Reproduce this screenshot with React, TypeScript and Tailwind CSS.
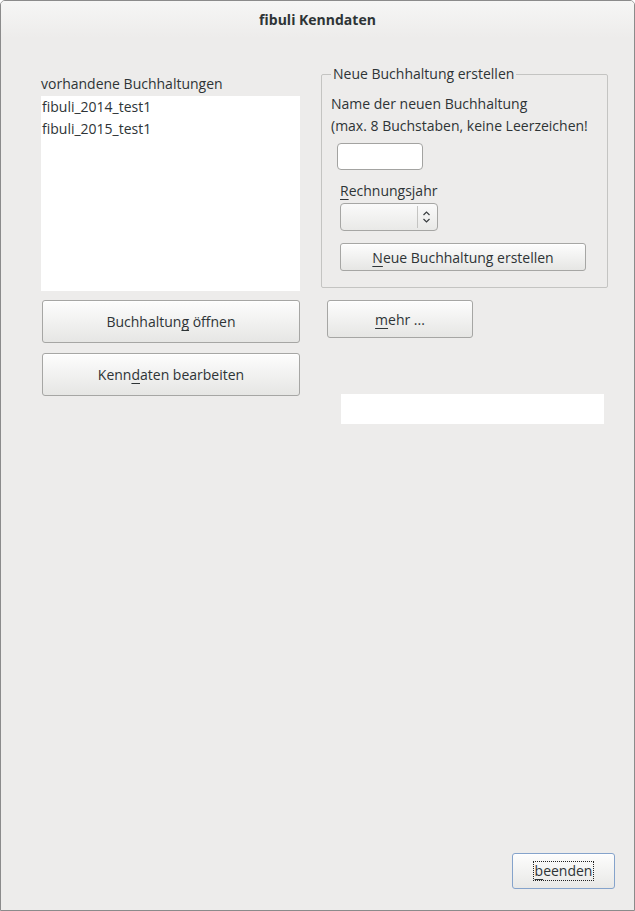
const btn =
  "flex items-center justify-center rounded-[3px] border border-[#a6a6a4] bg-gradient-to-b from-[#fdfdfd] to-[#e6e6e4] text-[#2e3436] shadow-[inset_0_1px_0_#ffffff]";

function U({ children }: { children: string }) {
  return <span className="underline underline-offset-[3px] decoration-1">{children}</span>;
}

export default function App() {
  return (
    <div
      className="w-[635px] h-[911px] flex flex-col border border-[#8b8b8b] rounded-t-[5px] bg-[#edeceb] text-[14px] text-[#2e3436] overflow-hidden"
      style={{ fontFamily: '"Open Sans", "DejaVu Sans", sans-serif' }}
    >
      {/* title bar */}
      <div className="h-[37px] flex justify-center pt-[8px] bg-gradient-to-b from-[#f6f6f5] to-[#edeceb] font-bold text-[14px] text-[#2e3436]">
        fibuli Kenndaten
      </div>

      <div className="flex items-start pl-[40px] pt-[29px]">
        {/* left column */}
        <div className="w-[259px] flex flex-col">
          <div className="h-[18px] leading-[18px] mt-[8px] mb-[3px]">vorhandene Buchhaltungen</div>
          <div className="h-[195px] bg-white">
            <div className="leading-[22px] px-[1px]">fibuli_2014_test1</div>
            <div className="leading-[22px] px-[1px]">fibuli_2015_test1</div>
          </div>
          <button className={`${btn} ml-[1px] mt-[9px] h-[43px]`}>
            Buchhaltun<U>g</U>&nbsp;öffnen
          </button>
          <button className={`${btn} ml-[1px] mt-[10px] h-[43px]`}>
            Kenn<U>d</U>aten bearbeiten
          </button>
        </div>

        {/* right column */}
        <div className="ml-[21px] w-[287px] flex flex-col">
          <fieldset className="h-[222px] border border-[#c4c4c2] rounded-[2px] pl-[9px] mt-[-1px]">
            <legend className="px-[2px] leading-[16px]">Neue Buchhaltung erstellen</legend>
            <div className="leading-[22px] mt-[11px]">Name der neuen Buchhaltung</div>
            <div className="leading-[22px] whitespace-nowrap">(max. 8 Buchstaben, keine Leerzeichen!</div>
            <div className="ml-[6px] mt-[6px] w-[86px] h-[27px] rounded-[4px] border border-[#a3a3a1] bg-white" />
            <div className="ml-[9px] mt-[12px] leading-[18px]">
              <U>R</U>echnungsjahr
            </div>
            <div className="ml-[9px] mt-[3px] w-[98px] h-[28px] rounded-[4px] border border-[#a6a6a4] bg-gradient-to-b from-[#fafafa] to-[#e9e9e7] flex justify-end items-center">
              <div className="h-[22px] w-px bg-[#c4c4c2]" />
              <svg width="19" height="18" viewBox="0 0 19 18" fill="none" stroke="#3a3e40" strokeWidth="1.2">
                <path d="M5.5 7 L8.5 4 L11.5 7" />
                <path d="M5.5 11 L8.5 14 L11.5 11" />
              </svg>
            </div>
            <button className={`${btn} ml-[9px] mt-[12px] w-[246px] h-[28px]`}>
              <U>N</U>eue Buchhaltung erstellen
            </button>
          </fieldset>
          <button className={`${btn} ml-[6px] mt-[12px] w-[146px] h-[38px]`}>
            <U>m</U>ehr ...
          </button>
          <div className="ml-[20px] mt-[56px] w-[263px] h-[30px] bg-white" />
        </div>
      </div>

      <div className="mt-auto flex justify-end pr-[19px] pb-[21px]">
        <button className="w-[103px] h-[36px] flex items-center justify-center rounded-[3px] border border-[#85a3cb] bg-gradient-to-b from-[#fdfdfd] to-[#e8e8e6] shadow-[inset_0_1px_0_#ffffff]">
          <span className="border border-dotted border-[#222] px-[1px] leading-[18px] text-[#2e3436]">
            <U>b</U>eenden
          </span>
        </button>
      </div>
    </div>
  );
}
